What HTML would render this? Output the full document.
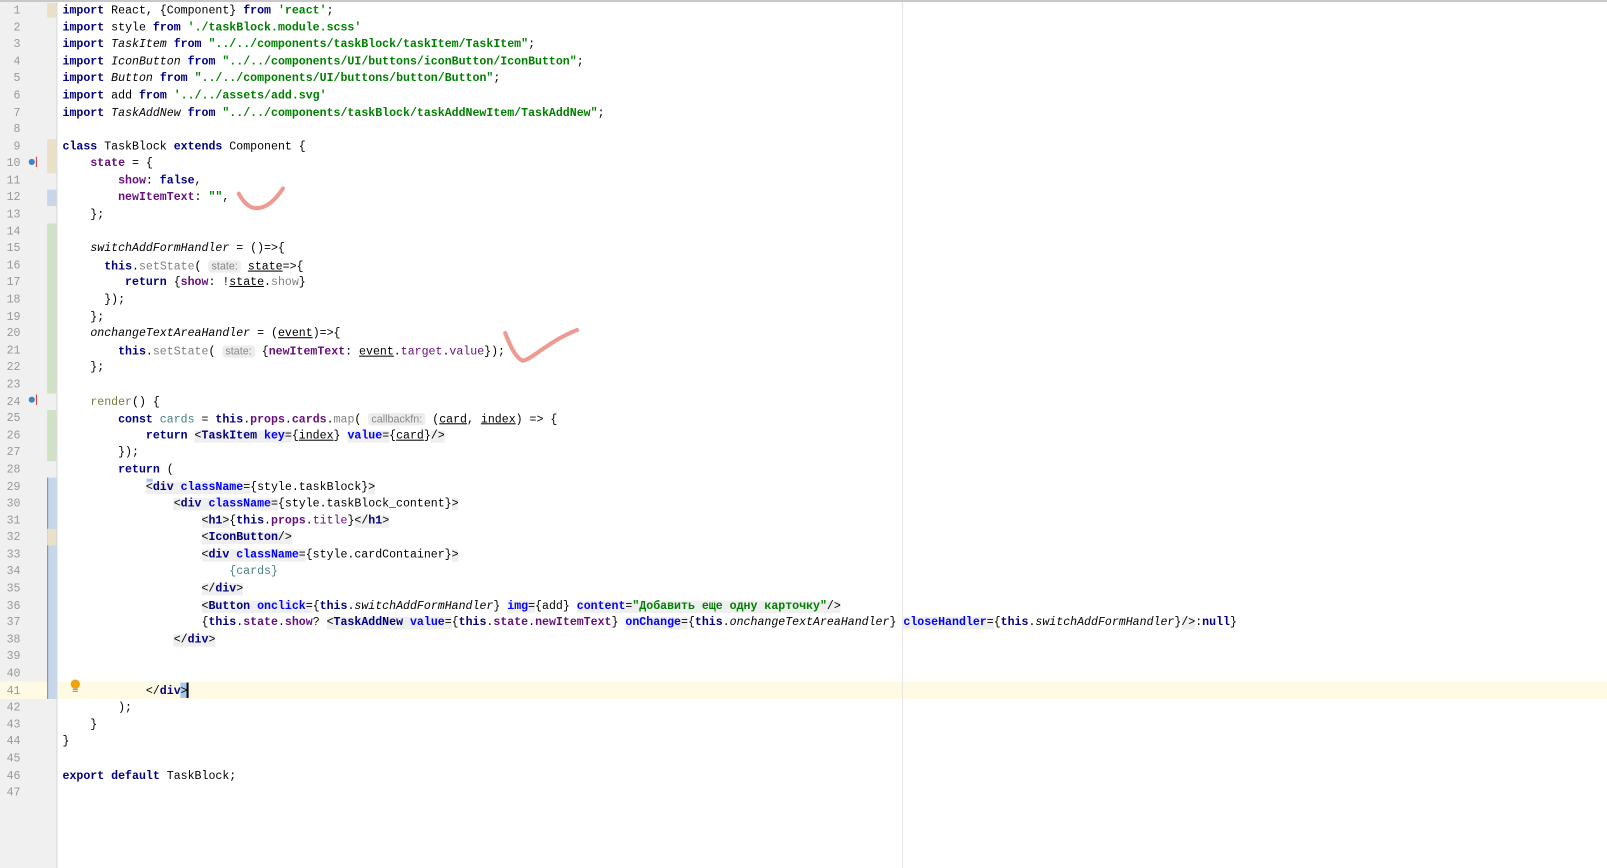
<!DOCTYPE html>
<html><head><meta charset="utf-8"><style>
html,body{margin:0;padding:0;width:1607px;height:847px;overflow:hidden;background:#fff;}
#w{position:absolute;left:0;top:0;width:1568px;height:827px;transform:scale(1.0249);transform-origin:0 0;}
body{font-family:"Liberation Mono",monospace;font-size:11.3px;color:#000;}
#top{position:absolute;left:0;top:0;width:1568px;height:2px;background:#c8c8c8;}
#gut{position:absolute;left:0;top:2px;width:55px;height:845px;background:#f0f0f0;border-right:1px solid #d8d8d8;}
#margin{position:absolute;left:880px;top:2px;width:1px;height:845px;background:#e4e4e4;}
#cur{position:absolute;left:0;top:665px;width:1568px;height:16.6px;background:#fffae3;}
.ln{position:absolute;left:0;width:20px;text-align:right;color:#999;height:16.6px;line-height:16.6px;}
.c{position:absolute;left:61px;white-space:pre;height:16.6px;line-height:16.6px;}
.k{color:#000080;font-weight:bold}
.s{color:#008000;font-weight:bold}
.f{color:#660e7a;font-weight:bold}
.i{font-style:italic}
.t{background:#efefef}
.a{color:#0000ff;font-weight:bold}
.u{text-decoration:underline}
.h{background:#ededed;color:#888;font-family:"Liberation Sans",sans-serif;font-size:10.5px;border-radius:3px;padding:0 3px;}
.g{color:#458383}
.gr{color:#808080}
.strip{position:absolute;left:46px;width:9px;}
</style></head><body>
<div id="w">
<div id="top"></div>
<div id="gut"></div>
<div id="cur"></div>
<div id="margin"></div>
<div class="strip" style="top:3px;height:14px;background:#eadfc7"></div>
<div class="strip" style="top:136px;height:33px;background:#eadfc7"></div>
<div class="strip" style="top:185px;height:16px;background:#c7d7e8"></div>
<div class="strip" style="top:218px;height:166px;background:#cfe2c6"></div>
<div class="strip" style="top:400px;height:50px;background:#cfe2c6"></div>
<div class="strip" style="top:466px;height:216px;background:#c7d7e8;border-left:1px solid #6a8fbf"></div>
<div class="strip" style="top:516px;height:16px;background:#eadfc7"></div>
<div style="position:absolute;left:28px;top:155px;width:6px;height:6px;border-radius:50%;background:#3a87c8"></div>
<div style="position:absolute;left:35px;top:153px;width:1px;height:10px;background:#d33"></div>
<div style="position:absolute;left:28px;top:387px;width:6px;height:6px;border-radius:50%;background:#3a87c8"></div>
<div style="position:absolute;left:35px;top:385px;width:1px;height:10px;background:#d33"></div>
<div style="position:absolute;left:69px;top:663px;width:9px;height:9px;border-radius:50%;background:#f0a30a"></div>
<div style="position:absolute;left:71px;top:672px;width:5px;height:1px;background:#888;box-shadow:0 2px 0 #888"></div>
<div style="position:absolute;left:182px;top:666px;width:2px;height:15px;background:#000"></div>
<div style="position:absolute;left:143px;top:467px;width:6px;height:14px;background:#a6c8f0"></div>
<div style="position:absolute;left:176px;top:666px;width:6px;height:15px;background:#a6c8f0"></div>

<div id="lines"></div>
<svg style="position:absolute;left:0;top:0" width="1568" height="827">
<path d="M233 189 C238 198 244 204 252 203 C262 202 270 193 276 184" fill="none" stroke="#ec9a92" stroke-width="4" stroke-linecap="round"/>
<path d="M493 325 C498 338 503 349 510 352 C520 350 535 333 563 322" fill="none" stroke="#ec9a92" stroke-width="4" stroke-linecap="round"/>
</svg>
</div>
<script>
var L=[
'<span class="k">import</span> React, {Component} <span class="k">from</span> <span class="s">\'react\'</span>;',
'<span class="k">import</span> style <span class="k">from</span> <span class="s">\'./taskBlock.module.scss\'</span>',
'<span class="k">import</span> <span class="i">TaskItem</span> <span class="k">from</span> <span class="s">"../../components/taskBlock/taskItem/TaskItem"</span>;',
'<span class="k">import</span> <span class="i">IconButton</span> <span class="k">from</span> <span class="s">"../../components/UI/buttons/iconButton/IconButton"</span>;',
'<span class="k">import</span> <span class="i">Button</span> <span class="k">from</span> <span class="s">"../../components/UI/buttons/button/Button"</span>;',
'<span class="k">import</span> add <span class="k">from</span> <span class="s">\'../../assets/add.svg\'</span>',
'<span class="k">import</span> <span class="i">TaskAddNew</span> <span class="k">from</span> <span class="s">"../../components/taskBlock/taskAddNewItem/TaskAddNew"</span>;',
'',
'<span class="k">class</span> TaskBlock <span class="k">extends</span> Component {',
'    <span class="f">state</span> = {',
'        <span class="f">show</span>: <span class="k">false</span>,',
'        <span class="f">newItemText</span>: <span class="s">""</span>,',
'    };',
'',
'    <span class="i">switchAddFormHandler</span> = ()=>{',
'      <span class="k">this</span>.<span class="gr">setState</span>( <span class="h">state:</span> <span class="u">state</span>=>{',
'         <span class="k">return</span> {<span class="f">show</span>: !<span class="u">state</span>.<span class="gr">show</span>}',
'      });',
'    };',
'    <span class="i">onchangeTextAreaHandler</span> = (<span class="u">event</span>)=>{',
'        <span class="k">this</span>.<span class="gr">setState</span>( <span class="h">state:</span> {<span class="f">newItemText</span>: <span class="u">event</span>.<span class="f" style="font-weight:normal">target</span>.<span class="f" style="font-weight:normal">value</span>});',
'    };',
'',
'    <span style="color:#7a7a43">render</span>() {',
'        <span class="k">const</span> <span class="g">cards</span> = <span class="k">this</span>.<span class="f">props</span>.<span class="f">cards</span>.<span class="gr">map</span>( <span class="h">callbackfn:</span> (<span class="u">card</span>, <span class="u">index</span>) => {',
'            <span class="k">return</span> <span class="t">&lt;<span class="k">TaskItem</span> <span class="a">key</span>=</span>{<span class="u">index</span>} <span class="t"><span class="a">value</span>=</span>{<span class="u">card</span>}<span class="t">/&gt;</span>',
'        });',
'        <span class="k">return</span> (',
'            <span class="t">&lt;<span class="k">div</span> <span class="a">className</span>=</span>{style.taskBlock}<span class="t">&gt;</span>',
'                <span class="t">&lt;<span class="k">div</span> <span class="a">className</span>=</span>{style.taskBlock_content}<span class="t">&gt;</span>',
'                    <span class="t">&lt;<span class="k">h1</span>&gt;</span>{<span class="k">this</span>.<span class="f">props</span>.<span class="f" style="font-weight:normal">title</span>}<span class="t">&lt;/<span class="k">h1</span>&gt;</span>',
'                    <span class="t">&lt;<span class="k">IconButton</span>/&gt;</span>',
'                    <span class="t">&lt;<span class="k">div</span> <span class="a">className</span>=</span>{style.cardContainer}<span class="t">&gt;</span>',
'                        <span class="g">{cards}</span>',
'                    <span class="t">&lt;/<span class="k">div</span>&gt;</span>',
'                    <span class="t">&lt;<span class="k">Button</span> <span class="a">onclick</span>=</span>{<span class="k">this</span>.<span class="i">switchAddFormHandler</span>} <span class="t"><span class="a">img</span>=</span>{add} <span class="t"><span class="a">content</span>=<span class="s">"Добавить еще одну карточку"</span>/&gt;</span>',
'                    {<span class="k">this</span>.<span class="f">state</span>.<span class="f">show</span>? <span class="t">&lt;<span class="k">TaskAddNew</span> <span class="a">value</span>=</span>{<span class="k">this</span>.<span class="f">state</span>.<span class="f">newItemText</span>} <span class="t"><span class="a">onChange</span>=</span>{<span class="k">this</span>.<span class="i">onchangeTextAreaHandler</span>} <span class="t"><span class="a">closeHandler</span>=</span>{<span class="k">this</span>.<span class="i">switchAddFormHandler</span>}<span class="t">/&gt;</span>:<span class="k">null</span>}',
'                <span class="t">&lt;/<span class="k">div</span>&gt;</span>',
'',
'',
'            &lt;/<span class="k">div</span>&gt;',
'        );',
'    }',
'}',
'',
'<span class="k">export default</span> TaskBlock;',
''
];
var h='';
for(var n=0;n<L.length;n++){var t=3+n*16.59;
h+='<div class="ln" style="top:'+t+'px">'+(n+1)+'</div><div class="c" style="top:'+t+'px">'+L[n]+'</div>';}
document.getElementById('lines').innerHTML=h;
</script>
</body></html>
